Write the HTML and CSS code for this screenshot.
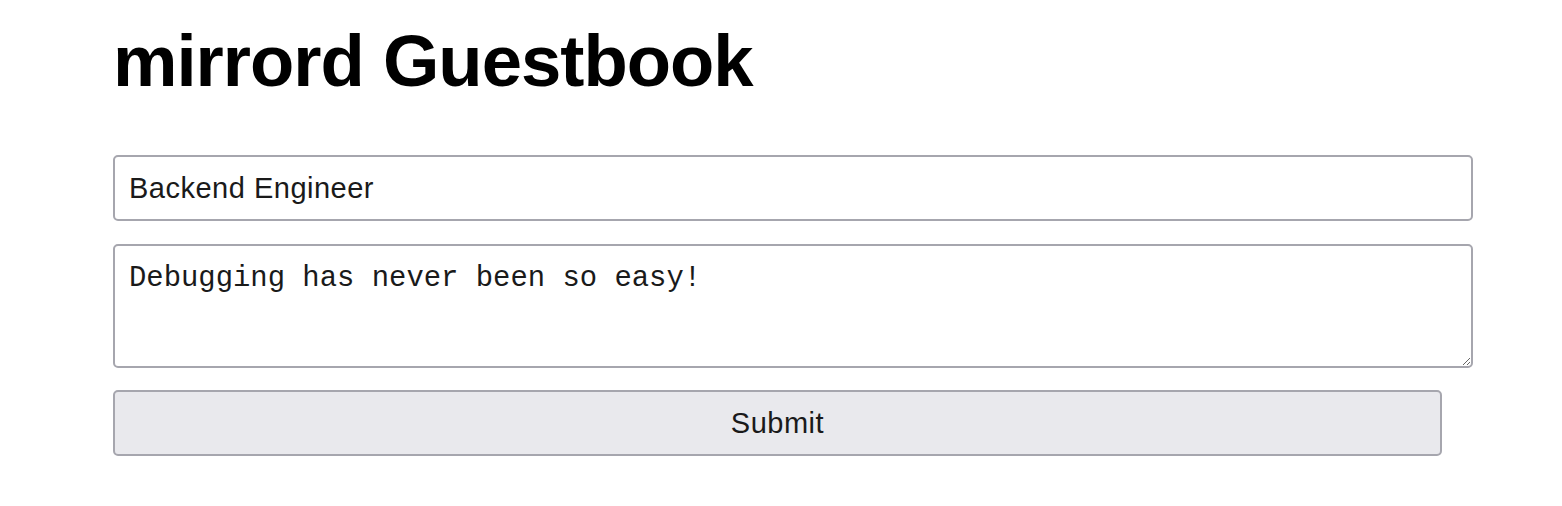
FILE: index.html
```html
<!DOCTYPE html>
<html>
<head>
<meta charset="utf-8">
<link rel="stylesheet" href="styles.css">
</head>
<body>
<div class="page">
  <h1 class="title">mirrord Guestbook</h1>
  <form class="form">
    <input class="field" type="text" value="Backend Engineer">
    <textarea class="message">Debugging has never been so easy!</textarea>
    <button class="submit" type="button">Submit</button>
  </form>
</div>
</body>
</html>
```
FILE: styles.css
```css
html, body {
  margin: 0;
  padding: 0;
  background: #ffffff;
}
.page {
  padding: 17px 89px 0 113px;
  font-family: "Liberation Sans", Arial, sans-serif;
}
.title {
  margin: 0;
  font-size: 72.5px;
  font-weight: bold;
  line-height: 88px;
  color: #000;
  letter-spacing: -1px;
}
.form {
  margin-top: 50px;
  display: flex;
  flex-direction: column;
  gap: 23px;
}
.field, .message, .submit {
  box-sizing: border-box;
  border: 2px solid #a6a6ae;
  border-radius: 5px;
  margin: 0;
  color: #1a1a1a;
}
.field {
  width: 100%;
  height: 66px;
  padding: 0 14px;
  font-family: "Liberation Sans", Arial, sans-serif;
  font-size: 29px;
  letter-spacing: 0.5px;
  background: #fff;
  outline: none;
}
.message {
  width: 100%;
  height: 124px;
  padding: 16px 14px 12px;
  font-family: "Liberation Mono", "DejaVu Sans Mono", monospace;
  font-size: 28.9px;
  line-height: 34px;
  background: #fff;
  resize: vertical;
  outline: none;
}
.submit {
  width: 1329px;
  height: 66px;
  background: #e9e9ed;
  font-family: "Liberation Sans", Arial, sans-serif;
  font-size: 29px;
  letter-spacing: 0.5px;
  padding: 0;
  margin-top: -1px;
}
```
